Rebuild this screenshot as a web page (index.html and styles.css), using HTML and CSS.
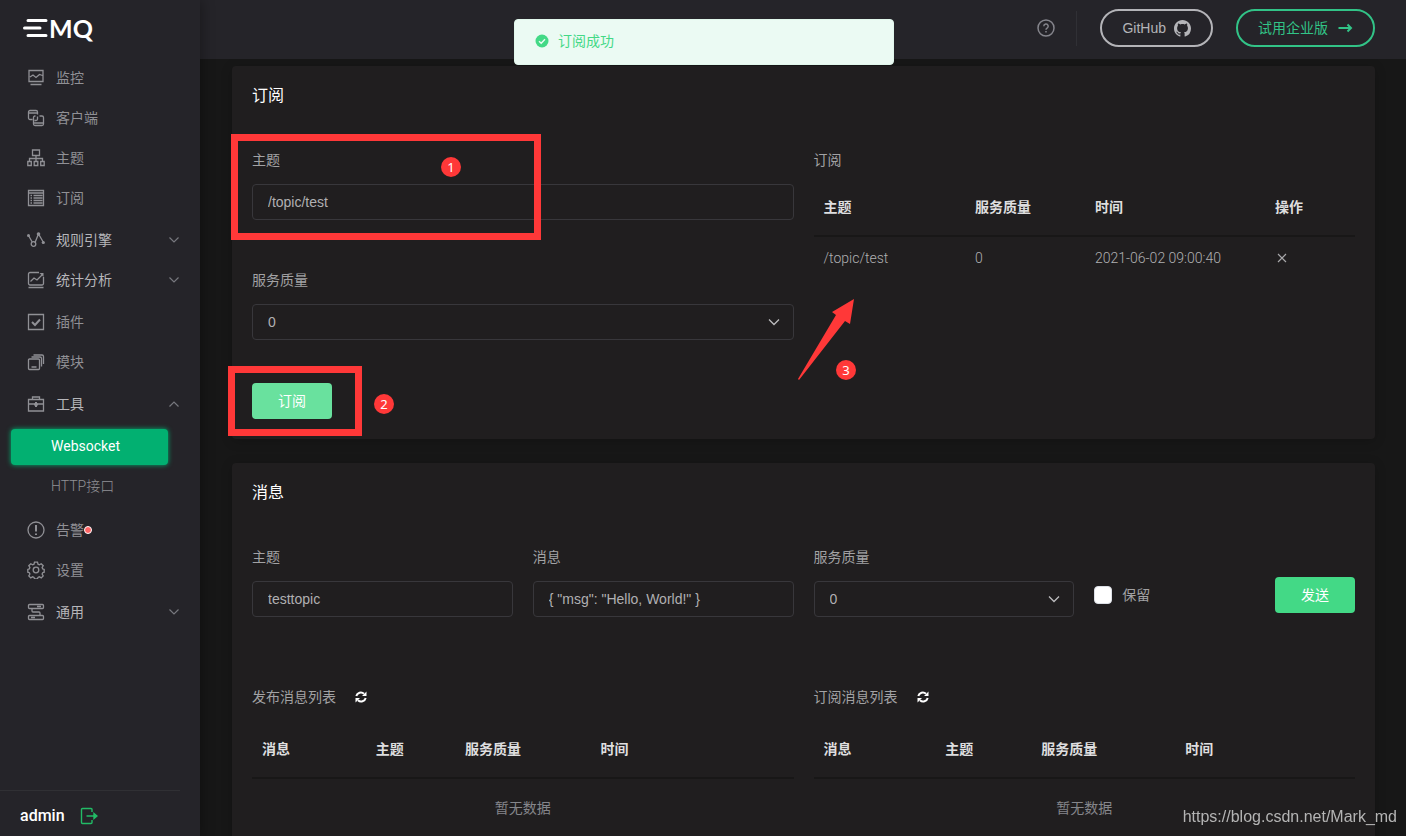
FILE: index.html
```html
<!DOCTYPE html>
<html lang="zh-CN">
<head>
<meta charset="utf-8">
<meta name="viewport" content="width=device-width, initial-scale=1">
<title>EMQ Dashboard - Websocket</title>
<link rel="stylesheet" href="styles.css">
</head>
<body>
<div class="app">
  <aside class="sidebar">
    <a class="logo" href="#" aria-label="EMQ">
      <svg class="logo-bars" viewBox="0 0 27 22" aria-hidden="true"><path d="M6 3.500h18M2.500 11h15.500M6 18.500h18"/></svg><span class="logo-text">MQ</span>
    </a>
    <nav class="nav">
      <div class="nav-group">
        <a class="nav-item" href="#"><svg class="icon" viewBox="0 0 18 18"><path d="M2 1.500h14v11H2zM3.500 15.500h11M3 8l3-2 3 2.500 3.500-3 3 1"/></svg>监控</a>
        <a class="nav-item" href="#"><svg class="icon" viewBox="0 0 18 18"><path d="M5.500 10.500H3a1.500 1.500 0 0 1-1.500-1.500V3A1.500 1.500 0 0 1 3 1.500h6A1.500 1.500 0 0 1 10.500 3v2.500M1.500 4h9M10.500 7.500V10A1.500 1.500 0 0 1 9 11.500H7.500M8.500 7H8A1.500 1.500 0 0 0 6.500 8.500V15A1.500 1.500 0 0 0 8 16.500h7a1.500 1.500 0 0 0 1.500-1.500V8.500A1.500 1.500 0 0 0 15 7h-2.500M6.500 14h10"/></svg>客户端</a>
        <a class="nav-item" href="#"><svg class="icon" viewBox="0 0 18 18"><path d="M5.500 1h7v5.500h-7zM9 6.500v6M2.500 12.500V9.500h13v3M.8 12.500h3.500v4H.8zM7.200 12.500h3.600v4H7.200zM13.700 12.500h3.500v4h-3.500z"/></svg>主题</a>
        <a class="nav-item" href="#"><svg class="icon" viewBox="0 0 18 18"><path d="M1.500 1.500h15v15h-15zM1.500 4h15M3.500 6.500h1.500M6.500 6.500h9M3.500 9h1.500M6.500 9h9M3.500 11.500h1.500M6.500 11.500h9M3.500 14h1.500M6.500 14h9"/></svg>订阅</a>
      </div>
      <div class="nav-group">
        <a class="nav-item nav-parent" href="#"><svg class="icon" viewBox="0 0 18 18"><path d="M1.500 4.500l3.700 6.500M8 11.500L11.500 3l5 8.500"/><circle cx="6.500" cy="13" r="2.300"/><circle class="dot" cx="1.500" cy="4.500" r="1.500"/><circle class="dot" cx="11.500" cy="3" r="1.800"/><circle class="dot" cx="16.300" cy="11.500" r="1.600"/></svg>规则引擎<svg class="chevron" viewBox="0 0 10 6"><path d="M.5.500L5 5 9.500.500"/></svg></a>
        <a class="nav-item nav-parent" href="#"><svg class="icon" viewBox="0 0 18 18"><path d="M12 1.500H3A1.500 1.500 0 0 0 1.500 3v9.500A1.500 1.500 0 0 0 3 14h12a1.500 1.500 0 0 0 1.500-1.500V6M1.500 16.500h15M3.500 10.500L7 7l3 2 5-5"/><path class="dot" d="M12.500 2h4v4z"/></svg>统计分析<svg class="chevron" viewBox="0 0 10 6"><path d="M.5.500L5 5 9.500.500"/></svg></a>
      </div>
      <div class="nav-group">
        <a class="nav-item" href="#"><svg class="icon" viewBox="0 0 18 18"><path d="M1.500 1.500h15v15h-15z"/><path class="thick" d="M5 9l3 3 5-5.500"/></svg>插件</a>
        <a class="nav-item" href="#"><svg class="icon" viewBox="0 0 18 18"><path d="M2.500 6h9a1 1 0 0 1 1 1v8.500a1 1 0 0 1-1 1h-9a1 1 0 0 1-1-1V7a1 1 0 0 1 1-1zM4.500 4H13a1.500 1.500 0 0 1 1.500 1.500v8M6.500 2H15a1.500 1.500 0 0 1 1.500 1.500V11M4.500 14h5"/></svg>模块</a>
      </div>
      <div class="nav-group">
        <a class="nav-item nav-parent" href="#"><svg class="icon" viewBox="0 0 18 18"><path d="M1.500 4.500h15V16h-15zM5.500 4.500V2h7v2.500M1.500 9h15"/><path class="thick" d="M9 7v5M7 9.500h4"/></svg>工具<svg class="chevron" viewBox="0 0 10 6"><path d="M.5 5.500L5 1l4.500 4.500"/></svg></a>
        <div class="submenu">
          <a class="sub-item sub-active" href="#">Websocket</a>
          <a class="sub-item" href="#">HTTP接口</a>
        </div>
      </div>
      <div class="nav-group">
        <a class="nav-item" href="#"><svg class="icon" viewBox="0 0 18 18"><circle cx="9" cy="9" r="8"/><path class="thick" d="M9 4v6.500M9 12.500v1.500"/></svg><span class="alarm">告警<i class="alarm-dot"></i></span></a>
        <a class="nav-item" href="#"><svg class="icon" viewBox="0 0 18 18"><circle cx="9" cy="9" r="2.800"/><path d="M7.500 1.200h3l.5 2 1.300.6 1.900-1.100 2 2-1.100 1.900.6 1.300 1.500.5v2.800l-1.500.5-.6 1.300 1.100 1.900-2 2-1.900-1.100-1.300.6-.5 1.400h-3L7 16.400l-1.300-.6-1.900 1.100-2-2L2.900 13l-.6-1.300-1.500-.5V8.400l1.500-.5.600-1.300-1.100-1.900 2-2 1.900 1.100L7 3.200z"/></svg>设置</a>
      </div>
      <div class="nav-group">
        <a class="nav-item nav-parent" href="#"><svg class="icon" viewBox="0 0 18 18"><path d="M2.500 1.500h13a1 1 0 0 1 1 1v2a1 1 0 0 1-1 1h-13a1 1 0 0 1-1-1v-2a1 1 0 0 1 1-1zM2.500 12.500h13a1 1 0 0 1 1 1v2a1 1 0 0 1-1 1h-13a1 1 0 0 1-1-1v-2a1 1 0 0 1 1-1zM5 5.500V8a1 1 0 0 0 1 1h6a1 1 0 0 1 1 1v2.500M10 3.500h4M4 14.500h4"/></svg>通用<svg class="chevron" viewBox="0 0 10 6"><path d="M.5.500L5 5 9.500.500"/></svg></a>
      </div>
    </nav>
    <div class="user">
      <span class="user-name">admin</span>
      <button class="logout" type="button" aria-label="退出"><svg viewBox="0 0 18 18"><path d="M12 5V2.500a1 1 0 0 0-1-1H2.500a1 1 0 0 0-1 1v13a1 1 0 0 0 1 1H11a1 1 0 0 0 1-1V13M6.500 9H16"/><path d="M14 6.500L17 9l-3 2.500z" fill="currentColor"/></svg></button>
    </div>
  </aside>

  <div class="page">
    <header class="topbar">
      <button class="help" type="button" aria-label="帮助"><svg viewBox="0 0 18 18"><circle cx="9" cy="9" r="8"/><path d="M6.800 7.200a2.200 2.200 0 1 1 3.300 1.900c-.8.500-1.100.8-1.100 1.600M9 12v1.500"/></svg></button>
      <span class="divider"></span>
      <a class="pill pill-github" href="#">GitHub<svg class="github" viewBox="0 0 16 16"><path d="M8 0C3.580 0 0 3.580 0 8c0 3.540 2.290 6.530 5.470 7.590.4.070.55-.17.55-.38 0-.19-.01-.82-.01-1.490-2.010.37-2.530-.49-2.690-.94-.09-.23-.48-.94-.82-1.130-.28-.15-.68-.52-.01-.53.63-.01 1.080.58 1.230.82.72 1.210 1.870.87 2.330.66.07-.52.280-.87.510-1.070-1.780-.2-3.640-.89-3.640-3.950 0-.87.310-1.590.82-2.150-.08-.2-.36-1.020.08-2.120 0 0 .67-.21 2.200.82.640-.18 1.320-.27 2-.27s1.360.09 2 .27c1.530-1.040 2.200-.82 2.200-.82.440 1.100.160 1.920.080 2.120.510.560.820 1.270.820 2.150 0 3.070-1.870 3.750-3.650 3.950.290.250.540.730.540 1.480 0 1.070-.01 1.930-.01 2.200 0 .21.150.46.550.38A8.010 8.010 0 0 0 16 8c0-4.420-3.580-8-8-8z"/></svg></a>
      <a class="pill pill-trial" href="#">试用企业版<svg class="arrow" viewBox="0 0 14 10"><path d="M0 5h12.500M9 1.500L12.500 5 9 8.500"/></svg></a>
    </header>

    <main class="content">
      <section class="card">
        <h2 class="card-title">订阅</h2>
        <div class="halves">
          <form class="sub-form">
            <div class="field">
              <label for="sub-topic">主题</label>
              <input class="control" id="sub-topic" type="text" value="/topic/test">
            </div>
            <div class="field">
              <label for="sub-qos">服务质量</label>
              <div class="select"><select class="control" id="sub-qos"><option>0</option><option>1</option><option>2</option></select><svg class="caret" viewBox="0 0 12 7"><path d="M1 .5l5 5 5-5"/></svg></div>
            </div>
            <button class="btn btn-hover" type="button">订阅</button>
          </form>
          <div class="sub-list">
            <div class="list-title">订阅</div>
            <table class="table">
              <colgroup><col><col class="w-qos"><col class="w-time"><col class="w-action"></colgroup>
              <thead><tr><th>主题</th><th>服务质量</th><th>时间</th><th>操作</th></tr></thead>
              <tbody><tr><td>/topic/test</td><td>0</td><td>2021-06-02 09:00:40</td><td><button class="remove" type="button" aria-label="取消订阅"><svg viewBox="0 0 10 10"><path d="M1 1l8 8M9 1L1 9"/></svg></button></td></tr></tbody>
            </table>
          </div>
        </div>
      </section>

      <section class="card">
        <h2 class="card-title">消息</h2>
        <form class="publish">
          <div class="field">
            <label for="pub-topic">主题</label>
            <input class="control" id="pub-topic" type="text" value="testtopic">
          </div>
          <div class="field">
            <label for="pub-msg">消息</label>
            <input class="control" id="pub-msg" type="text" value='{ "msg": "Hello, World!" }'>
          </div>
          <div class="field">
            <label for="pub-qos">服务质量</label>
            <div class="select"><select class="control" id="pub-qos"><option>0</option><option>1</option><option>2</option></select><svg class="caret" viewBox="0 0 12 7"><path d="M1 .5l5 5 5-5"/></svg></div>
          </div>
          <div class="send-row">
            <label class="retain" for="retain"><input id="retain" type="checkbox">保留</label>
            <button class="btn" type="button">发送</button>
          </div>
        </form>
        <div class="halves">
          <div class="msg-list">
            <div class="list-title">发布消息列表<button class="refresh" type="button" aria-label="刷新"><svg viewBox="0 0 12 12"><path d="M1.300 5A4.700 4.700 0 0 1 9 2.700M10.700 7A4.700 4.700 0 0 1 3 9.300"/><path class="tip" d="M11.500.500v4.500H7zM.5 11.500V7H5z"/></svg></button></div>
            <table class="table">
              <colgroup><col class="p-msg"><col class="p-topic"><col class="p-qos"><col></colgroup>
              <thead><tr><th>消息</th><th>主题</th><th>服务质量</th><th>时间</th></tr></thead>
              <tbody><tr><td class="empty" colspan="4">暂无数据</td></tr></tbody>
            </table>
          </div>
          <div class="msg-list">
            <div class="list-title">订阅消息列表<button class="refresh" type="button" aria-label="刷新"><svg viewBox="0 0 12 12"><path d="M1.300 5A4.700 4.700 0 0 1 9 2.700M10.700 7A4.700 4.700 0 0 1 3 9.300"/><path class="tip" d="M11.500.500v4.500H7zM.5 11.500V7H5z"/></svg></button></div>
            <table class="table">
              <colgroup><col class="s-msg"><col class="s-topic"><col class="s-qos"><col></colgroup>
              <thead><tr><th>消息</th><th>主题</th><th>服务质量</th><th>时间</th></tr></thead>
              <tbody><tr><td class="empty" colspan="4">暂无数据</td></tr></tbody>
            </table>
          </div>
        </div>
      </section>
    </main>
  </div>
</div>

<div class="toast" role="status"><svg viewBox="0 0 14 14"><circle cx="7" cy="7" r="6.500"/><path d="M4 7.200l2.200 2.100L10 5.200"/></svg>订阅成功</div>

<div class="mark-box mark-topic"></div>
<div class="mark-box mark-button"></div>
<span class="mark-num num-1">1</span>
<span class="mark-num num-2">2</span>
<span class="mark-num num-3">3</span>
<svg class="mark-arrow" viewBox="0 0 56 81"><path d="M56 0L52 25l-5-3L1 81l-1-1 38-64-4-3z"/></svg>
<div class="watermark">https://blog.csdn.net/Mark_md</div>
</body>
</html>
```
FILE: styles.css
```css
* { box-sizing: border-box; }

body {
  margin: 0;
  background: #171717;
  color: #a2a2a4;
  font: 14px/20px Roboto, "Noto Sans CJK SC", sans-serif;
}

a { color: inherit; text-decoration: none; }
button { padding: 0; border: 0; background: none; color: inherit; font: inherit; cursor: pointer; }
svg { display: block; flex: none; fill: none; stroke: currentColor; }

.app { display: flex; height: 100vh; overflow: hidden; }

/* Sidebar */
.sidebar {
  display: flex;
  flex-direction: column;
  flex: none;
  width: 200px;
  background: #252429;
  box-shadow: 2px 0 12px rgba(0, 0, 0, .3);
  z-index: 1;
}
.logo { display: flex; align-items: center; height: 58px; padding: 0 0 2px 22px; color: #fff; }
.logo-bars { width: 27px; height: 22px; stroke-width: 3; stroke-linecap: round; }
.logo-text { font: bold 25px/30px Lato, sans-serif; }
.nav { display: flex; flex-direction: column; flex: 1; gap: 2px; }
.nav-item { display: flex; align-items: center; gap: 11px; height: 40px; padding: 0 21px 0 27px; color: #909095; }
.nav-parent { color: #b6b6ba; }
.icon { width: 18px; height: 18px; color: #909095; stroke-width: 1.3; }
.icon .dot { fill: currentColor; stroke: none; }
.icon .thick { stroke-width: 2; }
.chevron { width: 10px; height: 6px; margin-left: auto; color: #77787e; stroke-width: 1.2; }
.submenu { display: flex; flex-direction: column; gap: 1px; padding: 5px 32px 2px 11px; }
.sub-item { height: 40px; padding-left: 40px; color: #909095; font-weight: 300; line-height: 40px; }
.sub-active {
  height: 36px;
  border-radius: 4px;
  background: #02b071;
  box-shadow: 0 0 5px #02b071;
  color: #fff;
  font-weight: 400;
  line-height: 35px;
}
.alarm { position: relative; }
.alarm-dot {
  position: absolute;
  top: 6px;
  right: -8px;
  width: 8px;
  height: 8px;
  border: 1px solid #fff;
  border-radius: 50%;
  background: #ff6464;
}
.user {
  display: flex;
  align-items: center;
  gap: 15px;
  height: 46px;
  margin-right: 20px;
  padding: 4px 0 0 20px;
  border-top: 1px solid #303034;
}
.user-name { color: #fff; font-size: 16px; font-weight: 500; }
.logout { color: #22bb66; }
.logout svg { width: 18px; height: 18px; stroke-width: 1.4; }

/* Top bar */
.page { display: flex; flex-direction: column; flex: 1; min-width: 0; }
.topbar {
  display: flex;
  align-items: center;
  justify-content: flex-end;
  flex: none;
  height: 59px;
  padding: 0 31px 3px 32px;
  background: #252429;
}
.help { color: #85858c; }
.help svg { width: 18px; height: 18px; stroke-width: 1.5; }
.divider { width: 1px; height: 35px; margin: 0 23px 0 21px; background: #303035; }
.pill {
  display: flex;
  align-items: center;
  height: 38px;
  padding: 0 20px;
  border: 2px solid;
  border-radius: 19px;
  font-family: "Liberation Sans", "Noto Sans CJK SC", sans-serif;
}
.pill-github { gap: 8px; color: #b4b4b8; }
.pill-trial { gap: 10px; margin-left: 23px; color: #32c387; }
.github { width: 17px; height: 17px; fill: currentColor; stroke: none; }
.arrow { width: 15px; height: 10px; stroke-width: 2; }

/* Cards */
.content {
  display: flex;
  flex-direction: column;
  flex: 1;
  gap: 24px;
  min-height: 0;
  padding: 7px 31px 24px 32px;
  overflow-y: auto;
  scrollbar-width: none;
}
.card { flex: none; padding: 20px; border-radius: 4px; background: #201e1f; box-shadow: 0 2px 12px rgba(0, 0, 0, .2); }
.card-title { margin: 0 0 42px; color: #fff; font-size: 16px; font-weight: 400; line-height: 20px; }
.halves { display: grid; grid-template-columns: 1fr 1fr; gap: 20px; }

.field { display: flex; flex-direction: column; gap: 12px; min-width: 0; }
.field label, .list-title { line-height: 24px; }
.control {
  width: 100%;
  height: 36px;
  padding: 0 15px;
  border: 1px solid #38373b;
  border-radius: 4px;
  outline: 0;
  appearance: none;
  background: transparent;
  color: #b0b0b2;
  font: 14px "Liberation Sans", sans-serif;
}
.select { display: grid; align-items: center; }
.select .control, .caret { grid-area: 1 / 1; }
.caret { justify-self: end; width: 12px; height: 7px; margin-right: 14px; color: #bcbcbe; stroke-width: 1.3; pointer-events: none; }

.sub-form { display: flex; flex-direction: column; gap: 48px; }
.sub-form .btn { margin-top: -5px; }
.btn { width: 80px; height: 36px; border-radius: 4px; background: #43d986; color: #fff; }
.btn-hover { background: #69e19e; }

.publish { display: grid; grid-template-columns: repeat(4, 1fr); gap: 20px; margin-bottom: 68px; }
.send-row { display: flex; align-items: center; align-self: end; justify-content: space-between; padding-bottom: 4px; }
.retain { display: flex; align-items: center; gap: 10px; }
.retain input { width: 18px; height: 18px; margin: 0; border: 1px solid #dcdfe6; border-radius: 4px; appearance: none; background: #fff; }
.retain input:checked { background: #43d986; }

/* Tables */
.sub-list .table { margin-top: 7px; }
.sub-list td { font-weight: 300; }
.msg-list .table { margin-top: 12px; }
.list-title { display: flex; align-items: center; gap: 19px; }
.refresh { color: #fff; }
.refresh svg { width: 12px; height: 12px; stroke-width: 2; }
.refresh .tip { fill: currentColor; stroke: none; }
.table { width: 100%; border-collapse: separate; border-spacing: 0; table-layout: fixed; }
.table th { height: 58px; padding: 0 10px; border-bottom: 2px solid #181717; color: #dededf; font-weight: 700; text-align: left; }
.table td { height: 42px; padding: 0 10px; color: #b0b0b2; }
.table .empty { height: 58px; color: #85868b; text-align: center; }
.w-qos { width: 120px; }
.w-time { width: 180px; }
.w-action { width: 90px; }
.p-msg { width: 21%; }
.p-topic { width: 16.5%; }
.p-qos { width: 25%; }
.s-msg { width: 22.5%; }
.s-topic { width: 17.7%; }
.s-qos { width: 26.6%; }
.remove { display: block; margin-left: 2px; color: #a8a8aa; }
.remove svg { width: 10px; height: 10px; stroke-width: 1.2; }

/* Overlays */
.toast {
  position: fixed;
  top: 19px;
  left: 50%;
  z-index: 3;
  display: flex;
  align-items: center;
  gap: 9px;
  width: 380px;
  height: 46px;
  margin-left: -189px;
  padding: 0 20px 2px;
  border: 1px solid #e1f7ec;
  border-radius: 4px;
  background: #ebfaf3;
  color: #43d986;
}
.toast svg { width: 14px; height: 14px; fill: currentColor; stroke: none; }
.toast path { fill: none; stroke: #ebfaf3; stroke-width: 1.4; }

.mark-box { position: absolute; z-index: 2; border: 7px solid #ff3838; }
.mark-topic { top: 134px; left: 231px; width: 310px; height: 106px; }
.mark-button { top: 366px; left: 228px; width: 134px; height: 70px; }
.mark-num {
  position: absolute;
  z-index: 2;
  width: 20px;
  height: 20px;
  border-radius: 50%;
  background: #ff3838;
  color: #fff;
  font: 13px/20px "Noto Sans", sans-serif;
  text-align: center;
}
.num-1 { top: 157px; left: 441px; }
.num-2 { top: 394px; left: 374px; }
.num-3 { top: 360px; left: 836px; }
.mark-arrow { position: absolute; top: 299px; left: 798px; z-index: 2; width: 56px; height: 81px; fill: #ff3838; stroke: none; }
.watermark {
  position: fixed;
  right: 9px;
  bottom: 9px;
  z-index: 2;
  color: #b4b4b4;
  font: 16px/20px "Liberation Sans", sans-serif;
}
```
